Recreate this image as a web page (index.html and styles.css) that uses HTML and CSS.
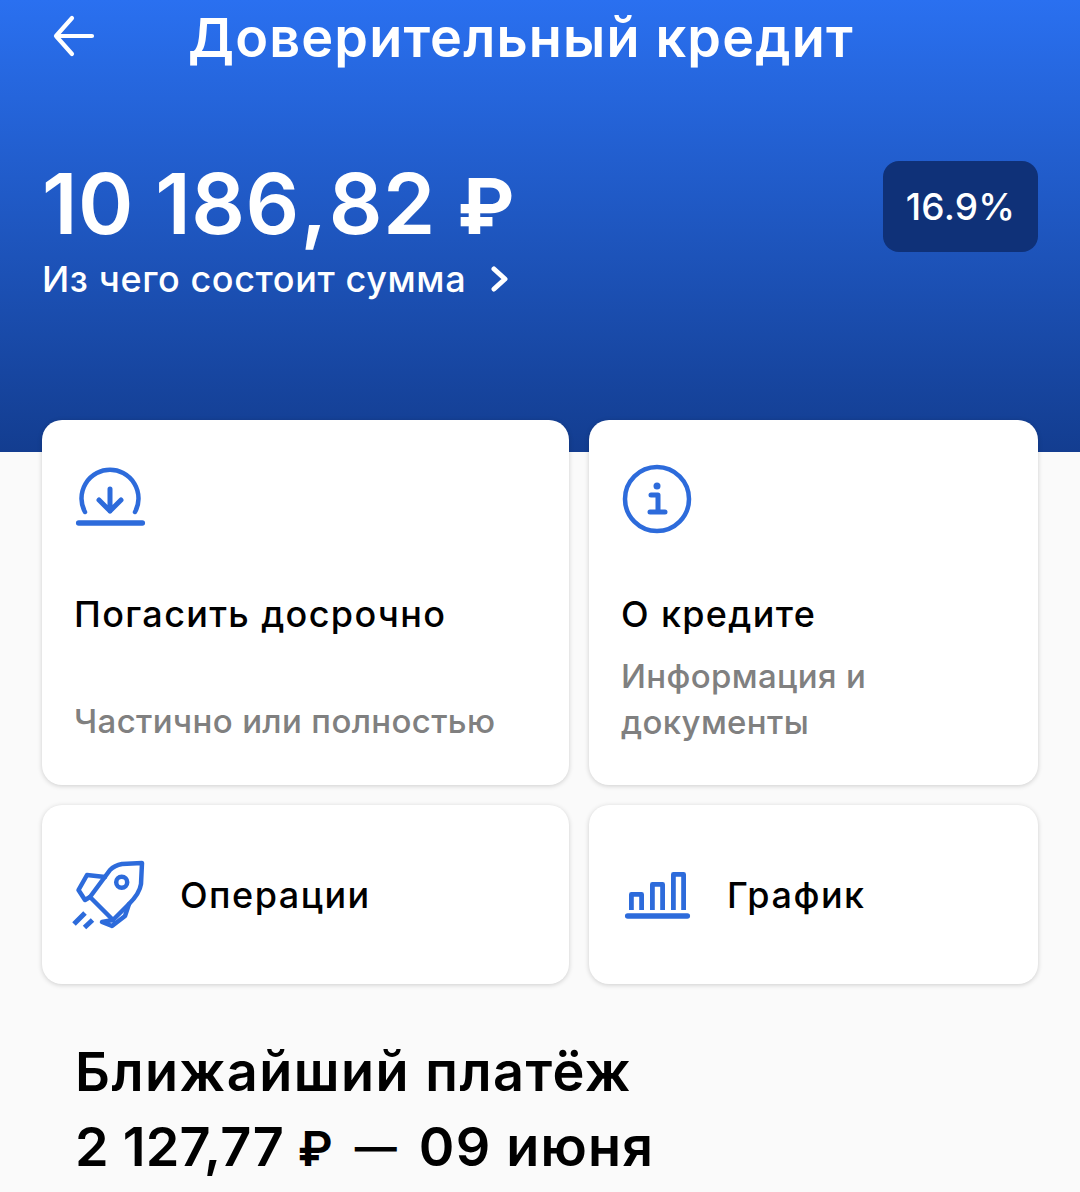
FILE: index.html
```html
<!DOCTYPE html>
<html lang="ru">
<head>
    <meta charset="UTF-8">
    <meta name="viewport" content="width=device-width, initial-scale=1.0">
    <title>Доверительный кредит</title>
    <link rel="stylesheet" href="styles.css">
</head>
<body>
    <div class="header">
        <div class="topbar">
            <svg class="back-icon" width="44" height="40" viewBox="0 0 44 40" fill="none" stroke="#fff" stroke-width="4.2" stroke-linecap="round" stroke-linejoin="round">
                <path d="M41 18H5M21 0L5 18L21 36"/>
            </svg>
            <h1>Доверительный кредит</h1>
        </div>
        <div class="summary">
            <div>
                <div class="amount">10 186<span class="comma">,</span>82 <span class="ruble">₽</span></div>
                <div class="amount-link">
                    <span>Из чего состоит сумма</span>
                    <svg width="18" height="26" viewBox="0 0 18 26" fill="none" stroke="#fff" stroke-width="5" stroke-linecap="round" stroke-linejoin="round">
                        <path d="M4 3L15 13L4 23"/>
                    </svg>
                </div>
            </div>
            <div class="rate">16.9%</div>
        </div>
    </div>

    <div class="cards">
        <div class="card card-large">
            <svg class="icon" width="70" height="60" viewBox="0 0 70 60" fill="none" stroke="#2d6bdb" stroke-width="4.5" stroke-linecap="round" stroke-linejoin="round">
                <path d="M10 43A28.5 28.5 0 1 1 60 43"/>
                <path d="M35 20V42M24 31L35 42L46 31" stroke-width="5"/>
                <path d="M3.7 54H67.3" stroke-width="5.5"/>
            </svg>
            <div class="card-title">Погасить досрочно</div>
            <div class="card-text card-text-bottom">Частично или полностью</div>
        </div>
        <div class="card card-large">
            <svg class="icon" width="70" height="60" viewBox="0 0 70 60" fill="none" stroke="#2d6bdb" stroke-width="4.5" stroke-linecap="round" stroke-linejoin="round">
                <circle cx="35" cy="30" r="32"/>
                <circle cx="35" cy="17" r="3.5" fill="#2d6bdb" stroke="none"/>
                <path d="M29 26H36V43M28 43H43" stroke-width="5"/>
            </svg>
            <div class="card-title">О кредите</div>
            <div class="card-text">Информация и документы</div>
        </div>
        <div class="card card-small">
            <svg class="icon" width="74" height="70" viewBox="0 0 74 70" fill="none" stroke="#2d6bdb" stroke-width="4.5" stroke-linecap="round" stroke-linejoin="round">
                <path d="M68 3L48 4C43 5 39 7 36 10L16 37L39 60L55 44C61 38 66 31 67 24Z"/>
                <path d="M31 17L13 15L4.500 30L11 40L16 37"/>
                <path d="M55 44L51 56L38 66L28 62L39 60"/>
                <circle cx="47.700" cy="22.300" r="5.500"/>
                <path d="M0 64L11 53M10.500 67.500L18.500 60" stroke-width="5" stroke-linecap="butt"/>
            </svg>
            <div class="card-title">Операции</div>
        </div>
        <div class="card card-small">
            <svg class="icon" width="74" height="60" viewBox="0 0 74 60" fill="none" stroke="#2d6bdb" stroke-width="4.800" stroke-linecap="butt" stroke-linejoin="round">
                <path d="M10.400 45V29.400H20.600V45"/>
                <path d="M31.400 45V19.400H41.600V45"/>
                <path d="M52.400 45V9.400H62.600V45"/>
                <path d="M6.700 51H66.300" stroke-width="5.500" stroke-linecap="round"/>
            </svg>
            <div class="card-title">График</div>
        </div>
    </div>

    <div class="next-payment">
        <div class="next-title">Ближайший платёж</div>
        <div class="next-sum">2 127,77 <span class="next-ruble">₽</span> <span class="next-dash">—</span> <span class="next-date">09 июня</span></div>
    </div>
</body>
</html>
```

FILE: styles.css
```css
* {
    box-sizing: border-box;
    margin: 0;
    padding: 0;
}

body {
    font-family: Inter, "Noto Sans", sans-serif;
    background-color: #fafafa;
    color: #000;
    height: 1192px;
    overflow: hidden;
}

.header {
    height: 452px;
    padding: 0 42px;
    background: linear-gradient(180deg, #2a70f0 0%, #133d90 100%);
    color: white;
}

.topbar {
    display: flex;
    align-items: center;
    gap: 93px;
    height: 76px;
    padding-left: 9px;
}

.back-icon {
    flex-shrink: 0;
    overflow: visible;
}

h1 {
    font-size: 54px;
    font-weight: 600;
    line-height: 76px;
    letter-spacing: 1.15px;
    white-space: nowrap;
}

.summary {
    display: flex;
    justify-content: space-between;
    align-items: flex-start;
    margin-top: 85px;
}

.amount {
    font-size: 84px;
    font-weight: 600;
    line-height: 86px;
    letter-spacing: 0.4px;
}

.comma {
    margin: 0 1px;
}

.ruble {
    font-size: 77px;
    font-weight: 700;
}

.amount-link {
    display: flex;
    align-items: center;
    gap: 24px;
    margin-top: 5px;
    font-size: 36px;
    font-weight: 500;
    line-height: 50px;
    letter-spacing: 0.6px;
}

.rate {
    width: 155px;
    height: 91px;
    border-radius: 16px;
    background-color: #0f3178;
    display: flex;
    align-items: center;
    justify-content: center;
    font-size: 37px;
    font-weight: 500;
    letter-spacing: 0.2px;
}

.cards {
    display: grid;
    grid-template-columns: 527px 449px;
    grid-template-rows: 365px 179px;
    gap: 20px;
    margin: -32px 42px 0;
}

.card {
    background-color: white;
    border-radius: 20px;
    box-shadow: 0 1px 5px rgba(0,0,0,0.18);
}

.card-large {
    display: flex;
    flex-direction: column;
    padding: 49px 32px 41px 33px;
}

.card-small {
    display: flex;
    align-items: center;
    gap: 32px;
    padding: 0 32px;
}

.icon {
    overflow: visible;
    flex-shrink: 0;
}

.card-title {
    font-size: 36px;
    font-weight: 500;
    line-height: 50px;
    letter-spacing: 1.5px;
}

.card-large .card-title {
    margin-top: 60px;
    margin-left: -1px;
    letter-spacing: 1.35px;
}

.card-text {
    margin-top: 14px;
    margin-left: -1px;
    font-size: 33px;
    font-weight: 500;
    line-height: 46px;
    letter-spacing: 0.35px;
    color: #808080;
}

.card-text-bottom {
    margin-top: auto;
}

.next-payment {
    padding: 50px 75px 0;
    font-size: 54px;
    font-weight: 600;
    line-height: 75px;
}

.next-title {
    letter-spacing: 1.5px;
}

.next-sum {
    letter-spacing: 0.2px;
}

.next-ruble {
    font-size: 48px;
}

.next-dash {
    font-size: 42px;
    margin: 0 8px;
    vertical-align: 4px;
}

.next-date {
    letter-spacing: 1.2px;
}
```
